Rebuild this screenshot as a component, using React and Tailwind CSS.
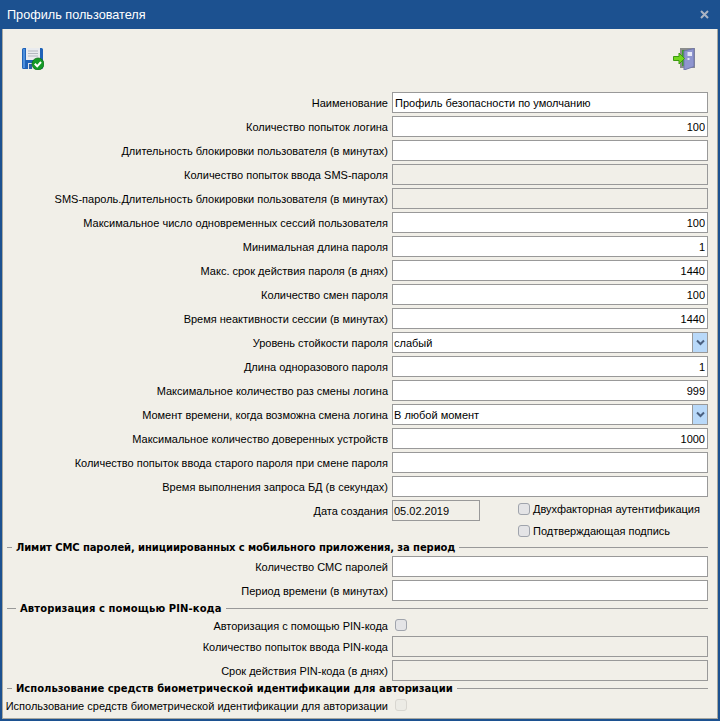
import React from "react";

const font = { fontFamily: '"Liberation Sans", "Noto Sans", sans-serif' };
const boldFont = { fontFamily: '"DejaVu Sans", sans-serif' };

const topRows = [
  { label: "Наименование", value: "Профиль безопасности по умолчанию", left: true },
  { label: "Количество попыток логина", value: "100" },
  { label: "Длительность блокировки пользователя (в минутах)", value: "" },
  { label: "Количество попыток ввода SMS-пароля", value: "", disabled: true },
  { label: "SMS-пароль.Длительность блокировки пользователя (в минутах)", value: "", disabled: true },
  { label: "Максимальное число одновременных сессий пользователя", value: "100" },
  { label: "Минимальная длина пароля", value: "1" },
  { label: "Макс. срок действия пароля (в днях)", value: "1440" },
  { label: "Количество смен пароля", value: "100" },
  { label: "Время неактивности сессии (в минутах)", value: "1440" },
  { label: "Уровень стойкости пароля", value: "слабый", select: true },
  { label: "Длина одноразового пароля", value: "1" },
  { label: "Максимальное количество раз смены логина", value: "999" },
  { label: "Момент времени, когда возможна смена логина", value: "В любой момент", select: true },
  { label: "Максимальное количество доверенных устройств", value: "1000" },
  { label: "Количество попыток ввода старого пароля при смене пароля", value: "" },
  { label: "Время выполнения запроса БД (в секундах)", value: "" },
];

const SaveIcon = () => (
  <svg width="22" height="22" viewBox="0 0 22 22">
    <path d="M1.500 0h18a1.500 1.500 0 0 1 1.500 1.500v18a1.500 1.500 0 0 1-1.500 1.500h-18a1.500 1.500 0 0 1-1.500-1.500v-18a1.500 1.500 0 0 1 1.500-1.500z" fill="#1f62b8" />
    <rect x="1" y="1" width="2" height="19" fill="#4d8fdc" />
    <rect x="4" y="0" width="14" height="12" fill="#e9ebee" />
    <path d="M6 3h10M6 5.500h10M6 8h10" stroke="#b4b8c0" strokeWidth="1.200" />
    <rect x="6" y="15" width="9" height="6" fill="#dfe3ea" />
    <rect x="7" y="16" width="3" height="5" fill="#2b5fa6" />
    <circle cx="16" cy="16" r="6" fill="#149a26" stroke="#0c6f18" strokeWidth="0.800" />
    <path d="M12.800 15.800l2.400 2.500 3.800-4.300" fill="none" stroke="#ffffff" strokeWidth="2" />
  </svg>
);

const ExitIcon = () => (
  <svg width="23" height="22" viewBox="0 0 23 22">
    <rect x="8" y="0" width="15" height="20" fill="#8b8d8c" />
    <rect x="10" y="2" width="11" height="16" fill="#3f9f2e" />
    <path d="M12 3l10-2.500v18l-10 3.500z" fill="#8f95cf" stroke="#7076ad" strokeWidth="1" />
    <rect x="15.500" y="4" width="4.500" height="4" fill="#e6e8f7" />
    <rect x="15.500" y="10" width="2" height="2" fill="#e6e8f7" />
    <path d="M1.500 8.500h5.500v-3.500l5.500 5.500-5.500 5.500v-3.500h-5.500z" fill="#72d61e" stroke="#3c9a10" strokeWidth="1" />
  </svg>
);

const Label = ({ children }) => (
  <span className="flex w-[385px] shrink-0 justify-end whitespace-nowrap pt-[2px] text-[11px] leading-none text-black">
    {children}
  </span>
);

const Field = ({ value, left, disabled, select }) => {
  if (select) {
    return (
      <div className="flex w-[316px] h-[21px] border border-[#999999] bg-white">
        <span className="flex-1 pl-[1px] text-[11px] leading-[20px] text-black">{value}</span>
        <span className="flex w-[15px] items-center justify-center border-l border-[#999999] bg-[#b9d9f9]">
          <svg width="9" height="7" viewBox="0 0 9 7">
            <path d="M1 1.500l3.500 3.500 3.500-3.500" fill="none" stroke="#4a6080" strokeWidth="2" />
          </svg>
        </span>
      </div>
    );
  }
  return (
    <input
      readOnly
      value={value}
      className={`w-[316px] h-[21px] border border-[#999999] px-[2px] text-[11px] text-black outline-none ${
        left ? "text-left" : "text-right"
      } ${disabled ? "bg-[#f1efe8]" : "bg-white"}`}
    />
  );
};

const Row = ({ label, ...field }) => (
  <div className="flex items-center gap-1">
    <Label>{label}</Label>
    <Field {...field} />
  </div>
);

const Check = ({ disabled }) => (
  <span
    className={`block w-3 h-3 shrink-0 rounded-[3px] border ${
      disabled ? "border-[#d8d6d0] bg-[#ecebe5]" : "border-[#a0a4ac] bg-[#e4e4e6]"
    }`}
  />
);

const Section = ({ title, offset, className = "" }) => (
  <div className={`flex h-[13px] items-center gap-1 pl-1 ${className}`}>
    <span className={`h-px bg-[#999999] ${offset}`} />
    <span className="whitespace-nowrap text-[10px] font-bold leading-none text-black" style={boldFont}>
      {title}
    </span>
    <span className="h-px flex-1 bg-[#999999]" />
  </div>
);

export default function App() {
  return (
    <div className="flex w-[720px] h-[721px] flex-col bg-[#1c5190]" style={font}>
      <div className="flex h-[29px] shrink-0 items-center justify-between pl-[7px] pr-[11px]">
        <span className="pt-[2px] text-[12.7px] text-white">Профиль пользователя</span>
        <svg width="9" height="9" viewBox="0 0 9 9">
          <path d="M1 1l7 7M8 1l-7 7" stroke="#aab4c4" strokeWidth="2" />
        </svg>
      </div>

      <div className="mx-[2px] mb-[2px] flex flex-1 flex-col border-b border-l border-r border-[#a8a8a0] bg-[#f1efe8] pr-[9px]">
        <div className="flex h-[63px] items-start justify-between pl-[19px] pr-[13px] pt-[19px]">
          <SaveIcon />
          <ExitIcon />
        </div>

        <div className="flex flex-col gap-[3px]">
          {topRows.map((r) => (
            <Row key={r.label} {...r} />
          ))}
        </div>

        <div className="flex h-[44px] items-start">
          <div className="mt-[3px] flex items-center gap-1">
            <Label>Дата создания</Label>
            <input
              readOnly
              value="05.02.2019"
              className="w-[88px] h-[21px] border border-[#999999] bg-[#f1efe8] pl-[1px] text-[11px] text-black outline-none"
            />
          </div>
          <div className="ml-[38px] mt-[2px] flex flex-col gap-[2px]">
            <div className="flex h-5 items-center gap-[3px]">
              <Check />
              <span className="text-[11px] whitespace-nowrap">Двухфакторная аутентификация</span>
            </div>
            <div className="flex h-5 items-center gap-[3px]">
              <Check />
              <span className="text-[11px] whitespace-nowrap">Подтверждающая подпись</span>
            </div>
          </div>
        </div>

        <Section
          title="Лимит СМС паролей, инициированных с мобильного приложения, за период"
          offset="w-[5px]"
          className="tracking-[-0.1px]"
        />
        <div className="mt-[2px] flex flex-col gap-[3px]">
          <Row label="Количество СМС паролей" value="" />
          <Row label="Период времени (в минутах)" value="" />
        </div>

        <Section title="Авторизация с помощью PIN-кода" offset="w-[9px]" className="mt-px tracking-[0.1px]" />
        <div className="flex h-5 items-center gap-1">
          <Label>Авторизация с помощью PIN-кода</Label>
          <span className="ml-[3px]">
            <Check />
          </span>
        </div>
        <div className="mt-px flex flex-col gap-[3px]">
          <Row label="Количество попыток ввода PIN-кода" value="" disabled />
          <Row label="Срок действия PIN-кода (в днях)" value="" disabled />
        </div>

        <Section
          title="Использование средств биометрической идентификации для авторизации"
          offset="w-[5px]"
          className="mt-px"
        />
        <div className="flex h-5 items-center gap-1">
          <Label>Использование средств биометрической идентификации для авторизации</Label>
          <span className="ml-[3px]">
            <Check disabled />
          </span>
        </div>
      </div>
    </div>
  );
}
